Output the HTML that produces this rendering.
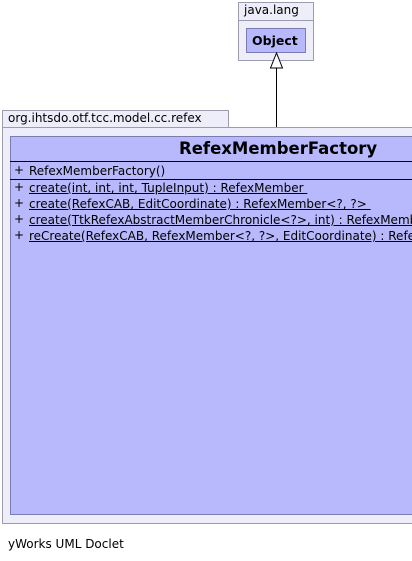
<!DOCTYPE html><html><head><style>
body{margin:0;width:412px;height:561px;background:#fff;position:relative;overflow:hidden;font-family:"DejaVu Sans",sans-serif;font-size:12px;color:#000}
div{position:absolute;box-sizing:border-box}
.pk{background:#eeeefa;border:1px solid #9c9cae}
.t{white-space:nowrap}
.u{text-decoration:underline}
#clip{left:0;top:0;width:412px;height:561px;overflow:hidden}
</style></head><body><div id="clip">
<div class="pk" style="left:238px;top:2px;width:76px;height:19px"></div>
<div class="t" style="left:244px;top:3px">java.lang</div>
<div class="pk" style="left:238px;top:20px;width:76px;height:41px"></div>
<div style="left:246px;top:28px;width:60px;height:25px;background:#b8b8fc;border:1px solid #7c7cb0"></div>
<div class="t" style="left:252px;top:33px;font-weight:bold;font-size:12.5px">Object</div>
<svg style="position:absolute;left:0;top:0" width="412" height="561"><line x1="276.5" y1="66" x2="276.5" y2="136" stroke="#000"/><polygon points="276.5,53 270.5,68 282.5,68" fill="#fff" stroke="#000"/></svg>
<div class="pk" style="left:2px;top:110px;width:227px;height:18px"></div>
<div class="t" style="left:8px;top:111px">org.ihtsdo.otf.tcc.model.cc.refex</div>
<div class="pk" style="left:2px;top:127px;width:420px;height:397px"></div>
<div style="left:10px;top:136px;width:410px;height:379px;background:#b8b8fc;border:1px solid #7c7cb0"></div>
<div class="t" style="left:179px;top:139px;font-weight:bold;font-size:16.5px">RefexMemberFactory</div>
<div style="left:10px;top:161px;width:410px;height:1px;background:#000"></div>
<div class="t" style="left:14px;top:163px">+</div><div class="t" style="left:29px;top:164px">RefexMemberFactory()</div>
<div style="left:10px;top:179px;width:410px;height:1px;background:#000"></div>
<div class="t" style="left:14px;top:180px">+</div><div class="t u" style="left:29px;top:181px">create(int, int, int, TupleInput) : RefexMember&nbsp;</div>
<div class="t" style="left:14px;top:196px">+</div><div class="t u" style="left:29px;top:197px">create(RefexCAB, EditCoordinate) : RefexMember&lt;?, ?&gt;&nbsp;</div>
<div class="t" style="left:14px;top:212px">+</div><div class="t u" style="left:29px;top:213px">create(TtkRefexAbstractMemberChronicle&lt;?&gt;, int) : RefexMember</div>
<div class="t" style="left:14px;top:228px">+</div><div class="t u" style="left:29px;top:229px">reCreate(RefexCAB, RefexMember&lt;?, ?&gt;, EditCoordinate) : RefexMember</div>
<div class="t" style="left:8px;top:537px">yWorks UML Doclet</div>
</div></body></html>
